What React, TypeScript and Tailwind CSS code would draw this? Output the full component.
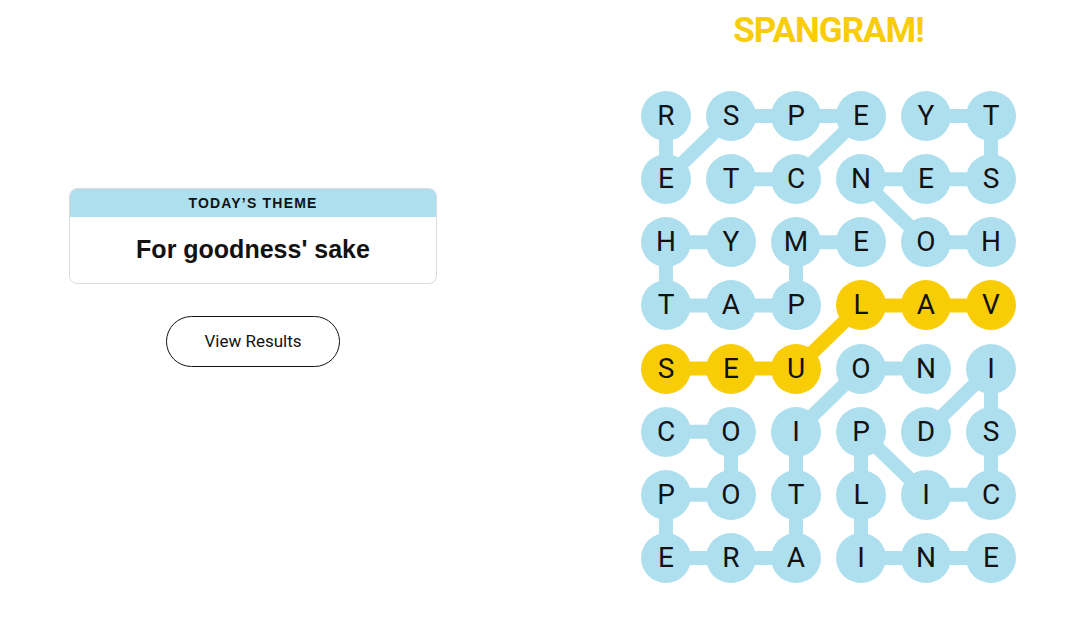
const BLUE = '#aedfee';
const YELLOW = '#f8cd05';

const rows = [
  'RSPEYT',
  'ETCNES',
  'HYMEOH',
  'TAPLAV',
  'SEUONI',
  'COIPDS',
  'POTLIC',
  'ERAINE',
];

// [r1, c1, r2, c2]
const blueEdges: number[][] = [
  // RESPECT
  [0, 0, 1, 0], [1, 0, 0, 1], [0, 1, 0, 2], [0, 2, 0, 3], [0, 3, 1, 2], [1, 2, 1, 1],
  // HONESTY
  [0, 4, 0, 5], [0, 5, 1, 5], [1, 5, 1, 4], [1, 4, 1, 3], [1, 3, 2, 4], [2, 4, 2, 5],
  // EMPATHY
  [2, 0, 2, 1], [2, 0, 3, 0], [3, 0, 3, 1], [3, 1, 3, 2], [3, 2, 2, 2], [2, 2, 2, 3],
  // COOPERATION
  [4, 3, 4, 4], [4, 3, 5, 2], [5, 2, 6, 2], [6, 2, 7, 2], [7, 2, 7, 1], [7, 1, 7, 0],
  [7, 0, 6, 0], [6, 0, 6, 1], [6, 1, 5, 1], [5, 1, 5, 0],
  // DISCIPLINE
  [4, 5, 5, 4], [4, 5, 5, 5], [5, 5, 6, 5], [6, 5, 6, 4], [6, 4, 5, 3], [5, 3, 6, 3],
  [6, 3, 7, 3], [7, 3, 7, 4], [7, 4, 7, 5],
];

// VALUES
const yellowEdges: number[][] = [
  [4, 0, 4, 1], [4, 1, 4, 2], [4, 2, 3, 3], [3, 3, 3, 4], [3, 4, 3, 5],
];

const spangram = new Set(['4-0', '4-1', '4-2', '3-3', '3-4', '3-5']);

const cx = (c: number) => 25 + c * 65;
const cy = (r: number) => 25 + r * 63.14;

function Board() {
  return (
    <div className="relative w-[375px]">
      <svg className="absolute left-0 top-0" width="375" height="492">
        {blueEdges.map((e, i) => (
          <line key={'b' + i} x1={cx(e[1])} y1={cy(e[0])} x2={cx(e[3])} y2={cy(e[2])} stroke={BLUE} strokeWidth="14" />
        ))}
        {yellowEdges.map((e, i) => (
          <line key={'y' + i} x1={cx(e[1])} y1={cy(e[0])} x2={cx(e[3])} y2={cy(e[2])} stroke={YELLOW} strokeWidth="14" />
        ))}
      </svg>
      <div className="relative grid grid-cols-[repeat(6,50px)] auto-rows-[50px] gap-x-[15px] gap-y-[13.14px] font-['Roboto',sans-serif]">
        {rows.map((row, r) =>
          row.split('').map((ch, c) => (
            <div
              key={`${r}-${c}`}
              className={`flex items-center justify-center rounded-full text-[28px] leading-none text-[#121212] ${spangram.has(`${r}-${c}`) ? 'bg-[#f8cd05]' : 'bg-[#aedfee]'}`}
            >
              {ch}
            </div>
          ))
        )}
      </div>
    </div>
  );
}

export default function App() {
  return (
    <div className="flex w-[1090px] h-[641px] bg-white font-['Liberation_Sans',sans-serif] text-[#121212]">
      {/* Left: theme + results */}
      <div className="flex w-[506px] flex-col items-center pt-[188px]">
        <div className="w-[368px] overflow-hidden rounded-lg border border-[#dcdcdc]">
          <div className="flex h-[28px] items-center justify-center bg-[#aedfee] text-[14px] font-bold tracking-[1.2px]">
            TODAY’S THEME
          </div>
          <div className="flex h-[66px] items-center justify-center text-[25px] font-bold">
            For goodness' sake
          </div>
        </div>
        <button className="mt-[32px] h-[51px] w-[174px] rounded-full border border-[#121212] font-['Roboto',sans-serif] text-[17px]">
          View Results
        </button>
      </div>

      {/* Right: board */}
      <div className="flex flex-col items-center pl-[135px]">
        <div className="mt-[11px] h-[40px] w-[375px] text-center font-['Roboto',sans-serif] text-[35px] font-bold leading-[40px] tracking-[-1px] text-[#f8cd05]">
          SPANGRAM!
        </div>
        <div className="mt-[40px]">
          <Board />
        </div>
      </div>
    </div>
  );
}
